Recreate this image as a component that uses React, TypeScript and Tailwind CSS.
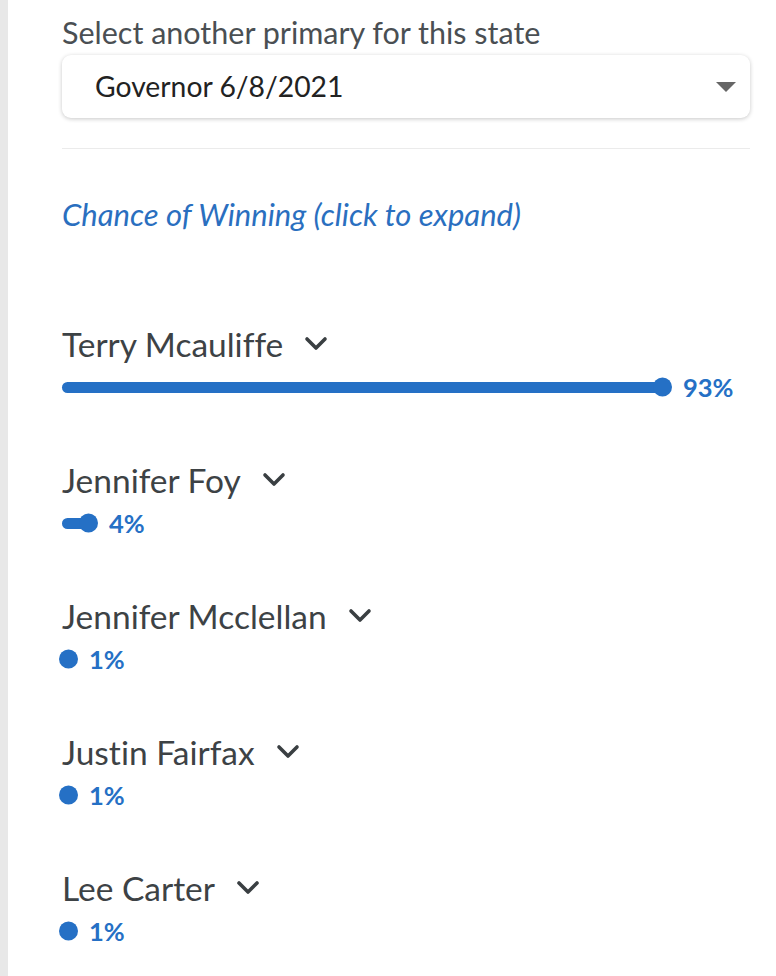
import React from "react";

const candidates = [
  { name: "Terry Mcauliffe", pct: 93 },
  { name: "Jennifer Foy", pct: 4 },
  { name: "Jennifer Mcclellan", pct: 1 },
  { name: "Justin Fairfax", pct: 1 },
  { name: "Lee Carter", pct: 1 },
];

function Chevron() {
  return (
    <svg width="24" height="16" viewBox="0 0 24 16" className="ml-[21px] shrink-0">
      <polyline
        points="3,3 12,12 21,3"
        fill="none"
        stroke="#3a3f42"
        strokeWidth="3.6"
        strokeLinecap="round"
        strokeLinejoin="round"
      />
    </svg>
  );
}

function CandidateRow({ name, pct }: { name: string; pct: number }) {
  // bar length scales off a 645px track
  const barWidth = Math.max(6, Math.round((pct / 100) * 645));
  return (
    <div className="mb-[62px]">
      <button className="flex h-[38px] items-center text-[33.5px] text-[#3d4245]">
        <span>{name}</span>
        <Chevron />
      </button>
      <div className="mt-[12px] flex h-[24px] items-center">
        <div className="relative h-[11px] rounded-full bg-[#2570c5]" style={{ width: barWidth }}>
          <span className="absolute -right-[9.5px] top-1/2 h-[19px] w-[19px] -translate-y-1/2 rounded-full bg-[#2570c5]" />
        </div>
        <span className="ml-[21px] text-[25.5px] font-bold text-[#2570c5]">{pct}%</span>
      </div>
    </div>
  );
}

export default function App() {
  return (
    <div className="flex min-h-[976px] bg-white font-['Lato',sans-serif] [font-variant-ligatures:none]">
      <div className="w-[8px] shrink-0 bg-[#e8e8e8]" />
      <main className="flex-1 pl-[54px] pr-[26px] pt-[12px]">
        <label className="block h-[40px] text-[30.5px] leading-[40px] text-[#4a4f53]">
          Select another primary for this state
        </label>
        <div className="mt-[3px] flex h-[63px] items-center justify-between rounded-[9px] bg-white pl-[33px] pr-[14px] shadow-[0_1px_4px_rgba(0,0,0,0.22)]">
          <span className="text-[28.3px] text-[#222]">Governor 6/8/2021</span>
          <svg width="20" height="10" viewBox="0 0 20 10">
            <polygon points="0,0 20,0 10,10" fill="#666" />
          </svg>
        </div>
        <hr className="mt-[30px] border-0 border-t border-[#ebebeb]" />
        <div className="mt-[45px] h-[40px] text-[31px] italic leading-[40px] text-[#2a6fbf]">
          Chance of Winning (click to expand)
        </div>
        <div className="mt-[91px]">
          {candidates.map((c) => (
            <CandidateRow key={c.name} name={c.name} pct={c.pct} />
          ))}
        </div>
      </main>
    </div>
  );
}
